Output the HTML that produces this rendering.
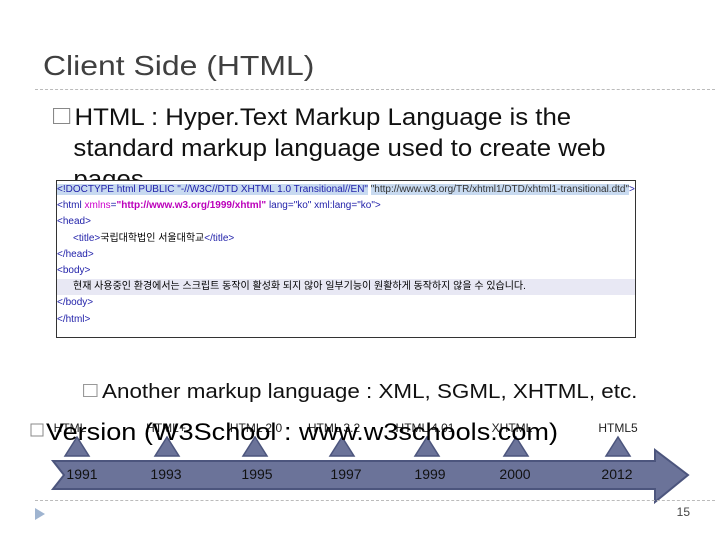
<!DOCTYPE html>
<html><head><meta charset="utf-8"><style>
body{margin:0;width:720px;height:540px;background:#fff;position:relative;overflow:hidden;font-family:"Liberation Sans","Noto Sans CJK KR",sans-serif}
.a{position:absolute;white-space:nowrap}
.s{transform-origin:0 0}
.dash{position:absolute;left:35px;width:680px;border-top:1px dashed #bbb}
.sq{display:inline-block;width:13px;height:13px;border:1px solid #888;margin-right:4px;vertical-align:1px}
.code div{height:16.2px;line-height:16px;font-size:10px;color:#22a}
</style></head><body>
<div class="a s" style="left:43px;top:50px;font-size:28px;color:#404040;transform:scaleX(1.14)">Client Side (HTML)</div>
<div class="dash" style="top:89px"></div>
<div class="a s" style="left:53px;top:102px;font-size:24px;color:#111;line-height:31px;transform:scaleX(1.075)"><span class="sq" style="width:14px;height:14px"></span>HTML : Hyper.Text Markup Language is the<br><span style="margin-left:19px">standard markup language used to create web</span><br><span style="margin-left:19px">pages</span></div>
<div class="a code" style="left:56px;top:180px;width:578px;height:155px;border:1px solid #333;background:#fff;overflow:hidden;padding-top:1px">
<div><span style="background:#c8daf0">&lt;!DOCTYPE html PUBLIC "-//W3C//DTD XHTML 1.0 Transitional//EN"</span> <span style="background:#c8daf0;color:#333">"http://www.w3.org/TR/xhtml1/DTD/xhtml1-transitional.dtd"</span>&gt;</div>
<div>&lt;html <span style="color:#c0c">xmlns</span>=<b style="color:#b0b">"http://www.w3.org/1999/xhtml"</b> lang="ko" xml:lang="ko"&gt;</div>
<div>&lt;head&gt;</div>
<div style="padding-left:16px">&lt;title&gt;<span style="color:#000">국립대학법인 서울대학교</span>&lt;/title&gt;</div>
<div>&lt;/head&gt;</div>
<div>&lt;body&gt;</div>
<div style="background:#e8e8f4;color:#000;padding-left:16px">현재 사용중인 환경에서는 스크립트 동작이 활성화 되지 않아 일부기능이 원활하게 동작하지 않을 수 있습니다.</div>
<div>&lt;/body&gt;</div>
<div>&lt;/html&gt;</div>
</div>
<div class="a s" style="left:83px;top:381px;font-size:20px;color:#111;transform:scaleX(1.12)"><span class="sq" style="width:11px;height:11px;border-color:#999"></span>Another markup language : XML, SGML, XHTML, etc.</div>
<svg class="a" style="left:0;top:0" width="720" height="540">
<polygon points="53,461 655,461 655,450 688,475 655,502 655,489 53,489 64,475" fill="#6b7399" stroke="#4c557d" stroke-width="2"/>
<g fill="#6b7399" stroke="#4c557d" stroke-width="1.5">
<polygon points="77,437 89,456 65,456"/><polygon points="167,437 179,456 155,456"/><polygon points="255,437 267,456 243,456"/><polygon points="342,437 354,456 330,456"/><polygon points="427,437 439,456 415,456"/><polygon points="516,437 528,456 504,456"/><polygon points="618,437 630,456 606,456"/>
</g>
<g font-family="Liberation Sans" font-size="14" fill="#111" text-anchor="middle">
<text x="82" y="479">1991</text><text x="166" y="479">1993</text><text x="257" y="479">1995</text><text x="346" y="479">1997</text><text x="430" y="479">1999</text><text x="515" y="479">2000</text><text x="617" y="479">2012</text>
</g>
<g font-family="Liberation Sans" font-size="12" fill="#222" text-anchor="middle">
<text x="70" y="432">HTML</text><text x="166" y="432">HTML+</text><text x="256" y="432">HTML 2.0</text><text x="334" y="432">HTML 3.2</text><text x="425" y="432">HTML 4.01</text><text x="512" y="432">XHTML</text><text x="618" y="432">HTML5</text>
</g>
<rect x="31" y="424" width="12" height="12" fill="none" stroke="#888"/>
<text x="46" y="440" font-family="Liberation Sans" font-size="24" fill="#000" textLength="512" lengthAdjust="spacingAndGlyphs">Version (W3School : www.w3schools.com)</text>
<polygon points="35,508 45,514 35,520" fill="#9fb4d0"/>
<text x="690" y="516" font-family="Liberation Sans" font-size="12" fill="#444" text-anchor="end">15</text>
</svg>
<div class="dash" style="top:500px"></div>
</body></html>
